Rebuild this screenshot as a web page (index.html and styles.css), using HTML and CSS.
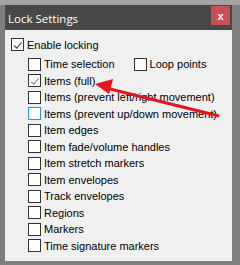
FILE: index.html
```html
<!DOCTYPE html>
<html lang="en">
<head>
    <meta charset="UTF-8">
    <title>Lock Settings</title>
    <link rel="stylesheet" href="styles.css">
</head>
<body>
    <div class="desk">
        <div class="window">
            <div class="titlebar">
                <span class="title">Lock Settings</span>
                <span class="close">x</span>
            </div>
            <div class="content">
                <div class="row main"><span class="box checked"></span>Enable locking</div>
                <div class="sub">
                    <div class="row pair">
                        <div class="row"><span class="box"></span>Time selection</div>
                        <div class="row"><span class="box"></span>Loop points</div>
                    </div>
                    <div class="row"><span class="box checked grey"></span>Items (full)</div>
                    <div class="row"><span class="box"></span>Items (prevent left/right movement)</div>
                    <div class="row"><span class="box focus"></span>Items (prevent up/down movement)</div>
                    <div class="row"><span class="box"></span>Item edges</div>
                    <div class="row"><span class="box"></span>Item fade/volume handles</div>
                    <div class="row"><span class="box"></span>Item stretch markers</div>
                    <div class="row"><span class="box"></span>Item envelopes</div>
                    <div class="row"><span class="box"></span>Track envelopes</div>
                    <div class="row"><span class="box"></span>Regions</div>
                    <div class="row"><span class="box"></span>Markers</div>
                    <div class="row"><span class="box"></span>Time signature markers</div>
                </div>
            </div>
        </div>
        <svg class="arrow" width="240" height="265" viewBox="0 0 240 265">
            <line x1="219" y1="116" x2="106" y2="88" stroke="#e8141c" stroke-width="3" />
            <polygon points="95,84 113,79 109,94" fill="#e8141c" />
        </svg>
    </div>
</body>
</html>
```

FILE: styles.css
```css
body{
    /*css reset*/
    margin: 0;
    padding: 0;
    background-color: #7f7f7f;
    font-family: "Liberation Sans", Arial, sans-serif;
}
.desk{
    position: relative;
    width: 240px;
    height: 265px;
    border-top: 5px solid #a3a3a3;
    box-sizing: border-box;
    overflow: hidden;
}
.window{
    margin-left: 5px;
    width: 227px;
    height: 256px;
    background-color: #f0f0f0;
}
.titlebar{
    height: 25px;
    background-color: #4a4846;
    display: flex;
    align-items: center;
    justify-content: space-between;
}
.title{
    color: #ffffff;
    font-family: "Open Sans", sans-serif;
    font-size: 11.5px;
    padding-left: 3px;
    padding-top: 1px;
}
.close{
    width: 19px;
    height: 19px;
    margin: 0 2px auto 0;
    margin-top: 1px;
    background-color: #c75050;
    color: #ffffff;
    font-size: 11px;
    font-weight: bold;
    display: flex;
    align-items: center;
    justify-content: center;
}
.content{
    padding: 8px 0 0 6px;
    font-size: 11px;
    color: #000000;
    white-space: nowrap;
}
.row{
    display: flex;
    align-items: center;
    height: 16.5px;
}
.main{
    height: 13px;
    margin-bottom: 5px;
}
.sub{
    padding-left: 17px;
}
.pair{
    gap: 19px;
}
.box{
    width: 11px;
    height: 11px;
    border: 1px solid #333333;
    background-color: #ffffff;
    margin-right: 3px;
    position: relative;
    flex-shrink: 0;
}
.box.focus{
    border-color: #2f8fe0;
}
.checked::after{
    content: "";
    position: absolute;
    width: 3px;
    height: 7px;
    border: solid #333333;
    border-width: 0 1px 1px 0;
    transform: rotate(40deg);
    transform-origin: 0 0;
    left: 7px;
    top: 1px;
}
.grey::after{
    border-color: #808080;
}
.arrow{
    position: absolute;
    left: 0;
    top: -5px;
}
```
